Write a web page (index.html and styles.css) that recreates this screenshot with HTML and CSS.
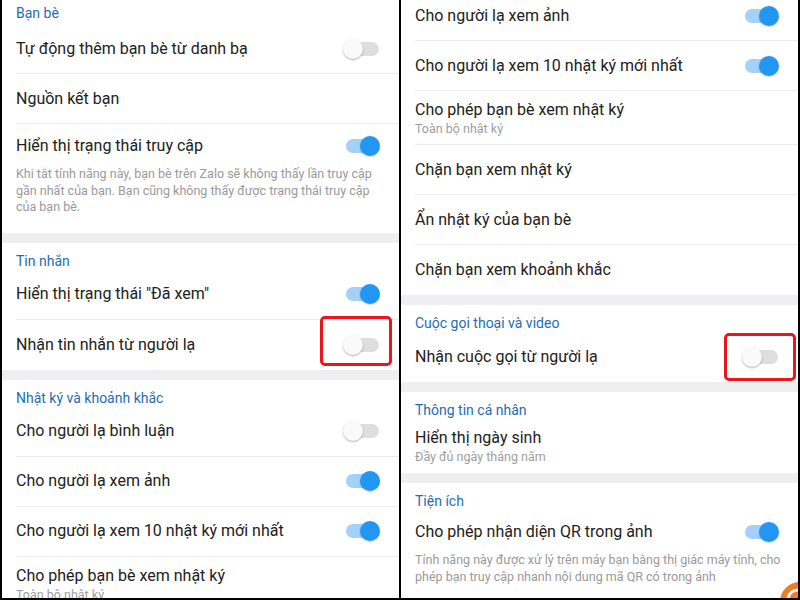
FILE: index.html
```html
<!DOCTYPE html>
<html lang="vi">
<head>
<meta charset="utf-8">
<title>Cài đặt quyền riêng tư</title>
<link rel="stylesheet" href="styles.css">
</head>
<body>
<div class="frame">
  <section class="panel">
    <div class="group">
      <div class="group-title first">Bạn bè</div>
      <div class="row"><div class="row-inner"><span class="label">Tự động thêm bạn bè từ danh bạ</span><span class="toggle"></span></div></div>
      <div class="row"><div class="row-inner"><span class="label">Nguồn kết bạn</span></div></div>
      <div class="row desc-row"><div class="row-inner">
        <div class="text-col">
          <div class="title-line"><span class="label">Hiển thị trạng thái truy cập</span><span class="toggle on"></span></div>
          <p class="desc">Khi tắt tính năng này, bạn bè trên Zalo sẽ không thấy lần truy cập gần nhất của bạn. Bạn cũng không thấy được trạng thái truy cập của bạn bè.</p>
        </div>
      </div></div>
    </div>
    <div class="group">
      <div class="group-title">Tin nhắn</div>
      <div class="row"><div class="row-inner"><span class="label">Hiển thị trạng thái "Đã xem"</span><span class="toggle on"></span></div></div>
      <div class="row"><div class="row-inner"><span class="label">Nhận tin nhắn từ người lạ</span><span class="toggle"><span class="mark mark-left"></span></span></div></div>
    </div>
    <div class="group">
      <div class="group-title">Nhật ký và khoảnh khắc</div>
      <div class="row"><div class="row-inner"><span class="label">Cho người lạ bình luận</span><span class="toggle"></span></div></div>
      <div class="row"><div class="row-inner"><span class="label">Cho người lạ xem ảnh</span><span class="toggle on"></span></div></div>
      <div class="row"><div class="row-inner"><span class="label">Cho người lạ xem 10 nhật ký mới nhất</span><span class="toggle on"></span></div></div>
      <div class="row sub-row"><div class="row-inner"><div class="text-col"><span class="label">Cho phép bạn bè xem nhật ký</span><span class="sub">Toàn bộ nhật ký</span></div></div></div>
    </div>
  </section>
  <div class="divider"></div>
  <section class="panel">
    <div class="group">
      <div class="row cut"><div class="row-inner"><span class="label">Cho người lạ xem ảnh</span><span class="toggle on"></span></div></div>
      <div class="row"><div class="row-inner"><span class="label">Cho người lạ xem 10 nhật ký mới nhất</span><span class="toggle on"></span></div></div>
      <div class="row sub-row"><div class="row-inner"><div class="text-col"><span class="label">Cho phép bạn bè xem nhật ký</span><span class="sub">Toàn bộ nhật ký</span></div></div></div>
      <div class="row"><div class="row-inner"><span class="label">Chặn bạn xem nhật ký</span></div></div>
      <div class="row"><div class="row-inner"><span class="label">Ẩn nhật ký của bạn bè</span></div></div>
      <div class="row"><div class="row-inner"><span class="label">Chặn bạn xem khoảnh khắc</span></div></div>
    </div>
    <div class="group">
      <div class="group-title">Cuộc gọi thoại và video</div>
      <div class="row"><div class="row-inner"><span class="label">Nhận cuộc gọi từ người lạ</span><span class="toggle"><span class="mark mark-right"></span></span></div></div>
    </div>
    <div class="group">
      <div class="group-title">Thông tin cá nhân</div>
      <div class="row sub-row"><div class="row-inner"><div class="text-col"><span class="label">Hiển thị ngày sinh</span><span class="sub">Đầy đủ ngày tháng năm</span></div></div></div>
    </div>
    <div class="group">
      <div class="group-title">Tiện ích</div>
      <div class="row desc-row"><div class="row-inner">
        <div class="text-col">
          <div class="title-line"><span class="label">Cho phép nhận diện QR trong ảnh</span><span class="toggle on"></span></div>
          <p class="desc wide">Tính năng này được xử lý trên máy bạn bằng thị giác máy tính, cho phép bạn truy cập nhanh nội dung mã QR có trong ảnh</p>
        </div>
      </div></div>
    </div>
    <div class="fab">
      <svg width="40" height="40" viewBox="0 0 40 40"><circle cx="20" cy="20" r="20" fill="#f47b20"/><path d="M8 16 A10 10 0 0 1 18 8" stroke="#fff" stroke-width="3" fill="none"/></svg>
    </div>
  </section>
</div>
</body>
</html>
```

FILE: styles.css
```css
* { box-sizing: border-box; }
html, body { margin: 0; padding: 0; }
body {
  width: 800px;
  height: 600px;
  overflow: hidden;
  background: #000;
  font-family: Roboto, "Noto Sans", "Liberation Sans", sans-serif;
  color: #212121;
}
.frame {
  display: flex;
  width: 800px;
  height: 600px;
  padding: 0 2px 2px 2px;
  background: #000;
}
.panel {
  position: relative;
  flex: 1 1 0;
  overflow: hidden;
  background: #efeff1;
  display: flex;
  flex-direction: column;
  gap: 10px;
}
.divider { width: 2px; flex: 0 0 2px; background: #000; }
.group { background: #fff; }
.group-title {
  height: 27px;
  padding: 10px 0 0 14px;
  font-size: 14px;
  line-height: 17px;
  color: #1f6db3;
  font-weight: 400;
}
.group-title.first { height: 24px; padding-top: 5px; }
.row { height: 50px; padding-left: 14px; }
.row.cut { margin-top: -9px; }
.row-inner {
  height: 100%;
  display: flex;
  align-items: center;
  justify-content: space-between;
  padding-right: 19px;
  border-bottom: 1px solid #ececec;
}
.row:last-child .row-inner { border-bottom: none; }
.label { font-size: 16px; line-height: 20px; color: #212121; }
.sub-row { height: 54px; }
.sub-row .row-inner { align-items: flex-start; padding-top: 9px; }
.text-col { display: flex; flex-direction: column; flex: 1; }
.sub { font-size: 12.5px; line-height: 17px; color: #9e9e9e; }
.desc-row { height: auto; }
.desc-row .row-inner { padding-top: 12px; padding-bottom: 17px; align-items: flex-start; }
.title-line { display: flex; justify-content: space-between; align-items: center; height: 20px; }
.desc {
  margin: 10px 0 0 0;
  font-size: 12.5px;
  line-height: 16.5px;
  color: #9a9a9a;
}
.desc.wide { margin-right: -16px; }
.toggle {
  position: relative;
  flex: 0 0 37px;
  width: 37px;
  height: 20px;
}
.toggle::before {
  content: "";
  position: absolute;
  left: 3px; top: 3px;
  width: 33px; height: 14px;
  border-radius: 7px;
  background: #dedede;
}
.toggle::after {
  content: "";
  position: absolute;
  left: 0; top: 0;
  width: 20px; height: 20px;
  border-radius: 50%;
  background: #fafafa;
  box-shadow: 0 1px 2px rgba(0,0,0,0.3);
}
.toggle.on::before { background: #a3d1fa; }
.toggle.on::after { left: 17px; background: #2196f3; box-shadow: 0 1px 2px rgba(0,0,0,0.2); }
.mark {
  position: absolute;
  border: 3px solid #e8161d;
  border-radius: 5px;
  z-index: 2;
}
.mark-left { left: -23px; top: -19px; width: 72px; height: 50px; }
.mark-right { left: -18px; top: -14px; width: 72px; height: 48px; }
.fab {
  position: absolute;
  right: -22px;
  bottom: -24px;
  width: 40px;
  height: 40px;
}
.fab svg { display: block; }
```
